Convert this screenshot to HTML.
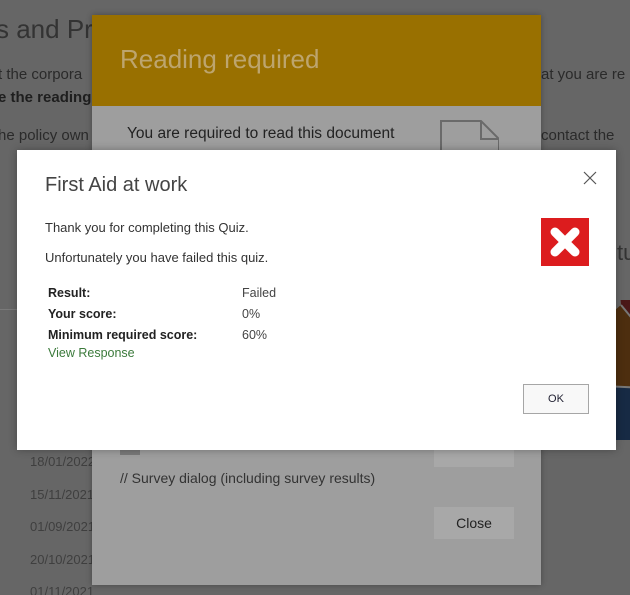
<!DOCTYPE html>
<html style="overflow:hidden"><head><style>
html,body{margin:0;width:630px;height:595px;overflow:hidden}
body{background:#666;font-family:"Segoe UI","Liberation Sans",sans-serif;position:relative}
.a{position:absolute;white-space:nowrap}
.bg{color:#2a2a2a;font-size:15px}
</style></head><body>
<div class="a" style="left:-4px;top:14px;font-size:26px;color:#333;font-weight:300">s and Pr</div>
<div class="a bg" style="left:-2px;top:66px">t the corpora</div>
<div class="a bg" style="left:-2px;top:89px;font-weight:bold;color:#1e1e1e">e the reading</div>
<div class="a bg" style="left:-2px;top:127px">he policy own</div>
<div class="a bg" style="left:541px;top:66px">at you are re</div>
<div class="a bg" style="left:541px;top:127px">contact the</div>
<div class="a" style="left:617px;top:240px;font-size:22px;color:#333">tu</div>
<div class="a" style="left:0;top:309px;width:92px;height:1px;background:#7a7a7a"></div>
<svg class="a" style="left:541px;top:300px" width="89" height="140"><circle cx="150" cy="90" r="110" fill="#3a2a1a"/><path d="M150 90 L80 5 L78 -20 L140 -30Z" fill="#4a1818"/><path d="M150 90 L80 5 A110 110 0 0 0 40 85Z" fill="#4d2e0f"/><path d="M150 90 L40 85 A110 110 0 0 0 100 190Z" fill="#172a44"/><path d="M80 5 L150 90 L40 85" stroke="#777" stroke-width="2" fill="none"/></svg>
<div class="a" style="left:30px;top:446px;font-size:13px;color:#3f3f3f;line-height:32.5px;height:149px;overflow:hidden">18/01/2022<br>15/11/2021<br>01/09/2021<br>20/10/2021<br>01/11/2021</div>
<div class="a" style="left:92px;top:15px;width:449px;height:570px;background:#9e9e9e;box-shadow:0 0 6px rgba(0,0,0,.3)">
 <div style="height:91px;background:#997000"></div>
 <div class="a" style="left:28px;top:29px;font-size:26px;color:#bda56e;font-weight:300">Reading required</div>
 <div class="a" style="left:35px;top:110px;font-size:15.5px;color:#222">You are required to read this document</div>
 <svg class="a" style="left:347px;top:104px" width="60" height="50"><path d="M2 50 V2 H42 L60 20 V50 M42 2 V20 H60" fill="none" stroke="#6a6a6a" stroke-width="2"/></svg>
 <div class="a" style="left:28px;top:420px;width:20px;height:20px;background:#7a7a7a"></div>
 <div class="a" style="left:342px;top:420px;width:80px;height:32px;background:#a8a8a8"></div>
 <div class="a" style="left:28px;top:455px;font-size:14px;color:#333">// Survey dialog (including survey results)</div>
 <div class="a" style="left:342px;top:492px;width:80px;height:32px;background:#a8a8a8;font-size:14px;color:#222;text-align:center;line-height:32px">Close</div>
</div>
<div class="a" style="left:17px;top:150px;width:599px;height:300px;background:#fff;box-shadow:0 0 8px rgba(0,0,0,.3)">
 <div class="a" style="left:28px;top:24px;font-size:20px;color:#444;font-weight:300">First Aid at work</div>
 <svg class="a" style="left:566px;top:21px" width="14" height="14"><path d="M1 1L13 13M13 1L1 13" stroke="#555" stroke-width="1.2"/></svg>
 <div class="a" style="left:28px;top:70px;font-size:13px;color:#333">Thank you for completing this Quiz.</div>
 <div class="a" style="left:28px;top:100px;font-size:13px;color:#333">Unfortunately you have failed this quiz.</div>
 <div class="a" style="left:31px;top:133px;font-size:12.5px;color:#222;font-weight:bold;line-height:21px">Result:<br>Your score:<br>Minimum required score:</div>
 <div class="a" style="left:225px;top:133px;font-size:12.5px;color:#444;line-height:21px">Failed<br>0%<br>60%</div>
 <div class="a" style="left:31px;top:196px;font-size:12.5px;color:#3b7a3b">View Response</div>
 <svg class="a" style="left:524px;top:68px" width="48" height="48"><rect width="48" height="48" fill="#dc1c1e"/><path d="M14 14L34 34M34 14L14 34" stroke="#fff" stroke-width="9" stroke-linecap="round"/></svg>
 <div class="a" style="left:506px;top:234px;width:64px;height:28px;border:1px solid #a6a6a6;background:#f8f8f8;font-size:11px;color:#223;text-align:center;line-height:28px">OK</div>
</div>
</body></html>
